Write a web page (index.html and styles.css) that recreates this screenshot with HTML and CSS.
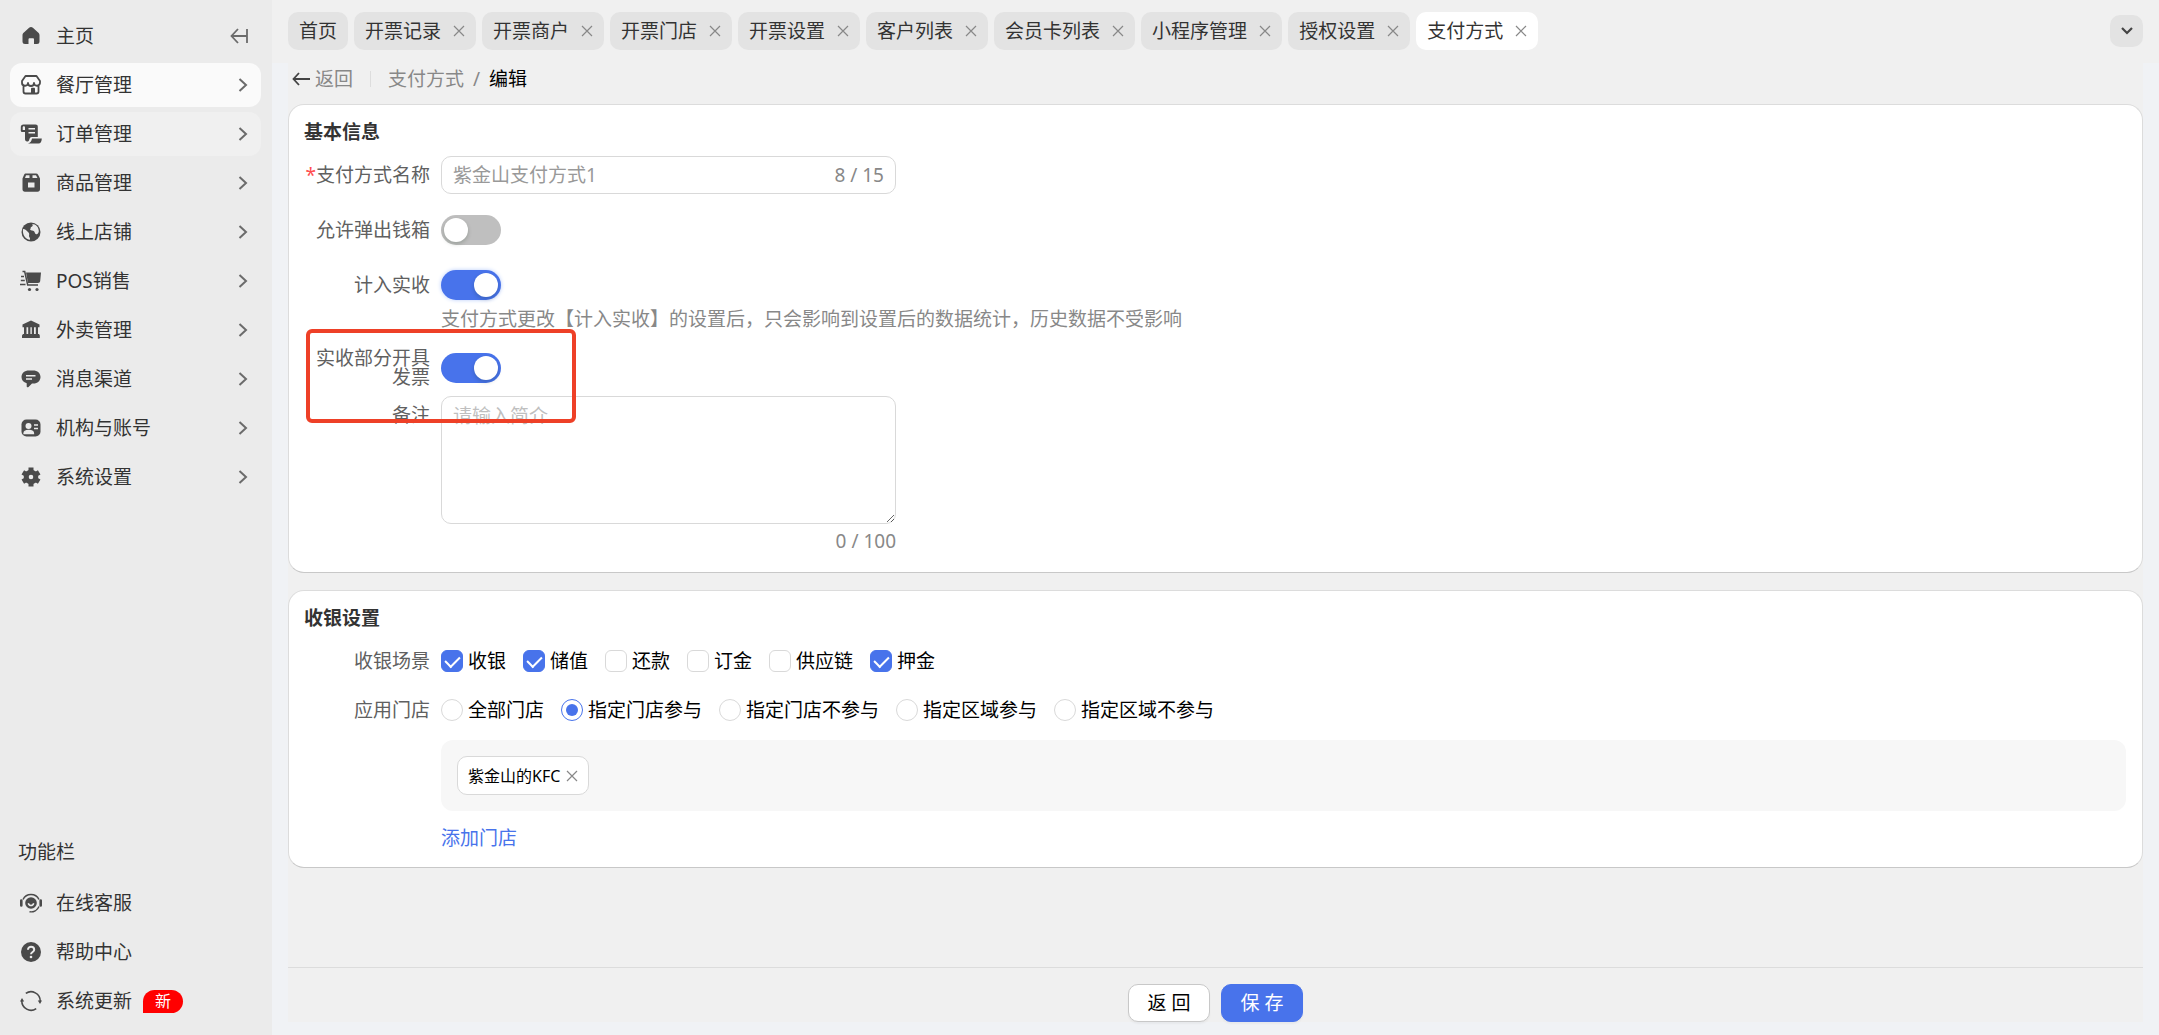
FILE: index.html
```html
<!DOCTYPE html>
<html lang="zh-CN">
<head>
    <meta charset="UTF-8">
    <meta name="viewport" content="width=device-width, initial-scale=1.0">
    <title>支付方式 - 编辑</title>
    <link rel="stylesheet" href="styles.css">
</head>
<body>

    <!-- Shared icons -->
    <svg class="sprite" aria-hidden="true">
        <symbol id="chevron" viewBox="0 0 10 16"><path d="M1.5 2l6.5 6-6.5 6" fill="none" stroke="currentColor" stroke-width="2"/></symbol>
        <symbol id="close" viewBox="0 0 12 12"><path d="M1 1l10 10M11 1L1 11" fill="none" stroke="currentColor" stroke-width="1.2"/></symbol>
    </svg>

    <!-- Sidebar -->
    <aside class="sidebar">
        <nav class="menu">
            <div class="menu-item">
                <a class="menu-link" href="#">
                    <svg class="menu-icon" viewBox="0 0 22 22"><path fill="currentColor" d="M11 2c.7 0 1.3.3 1.9.8l5.2 4.6c.9.8 1.4 1.6 1.4 2.800v6.300c0 1.700-1 2.500-2.500 2.500h-3v-4.500c0-.8-.4-1.200-1.200-1.200H9.700c-.8 0-1.200.4-1.200 1.200V19H5c-1.500 0-2.500-.8-2.500-2.500v-6.300c0-1.200.5-2 1.400-2.800l5.200-4.600C9.700 2.300 10.300 2 11 2z"/></svg>
                    主页
                </a>
                <button class="collapse" type="button" aria-label="收起菜单">
                    <svg width="18" height="16" viewBox="0 0 18 16"><path d="M8 1L1.500 8 8 15M2 8h15M17 1v14" fill="none" stroke="currentColor" stroke-width="1.800"/></svg>
                </button>
            </div>
            <a class="menu-item active" href="#">
                <svg class="menu-icon" viewBox="0 0 22 22"><path d="M5.500 2h11l3.500 5v1.500a3 3 0 0 1-6 .5 3 3 0 0 1-6 0 3 3 0 0 1-6-.5V7zM3.500 11v6.500c0 1.300.7 2 2 2h11c1.300 0 2-.7 2-2V11" fill="none" stroke="currentColor" stroke-width="1.800" stroke-linejoin="round"/><path d="M11 19.500V15c0-.8.400-1.200 1.200-1.200h1.600c.8 0 1.200.4 1.200 1.200v4.500z" fill="currentColor"/></svg>
                餐厅管理
                <svg class="arrow"><use href="#chevron"/></svg>
            </a>
            <a class="menu-item hover" href="#">
                <svg class="menu-icon" viewBox="0 0 22 22"><path fill="currentColor" fill-rule="evenodd" d="M3.500 1.500h12c1.500 0 2.300.9 2.300 2.300V14H12c-2 0-2.500 1.500-2.800 3-.3 1-1.200 1.500-2 1.500-1.500 0-2.200-1-2.200-2.500V9H2.200C1.300 9 .8 8.400.8 7.500V4.200c0-1.700 1-2.700 2.700-2.700zm-.8 5.500h2.300V4.500c0-1.600-2.300-1.600-2.300 0zM8.500 5v1.500H15V5zm0 4v1.500H15V9zM12 15.500h9.800c-.1 3-1.200 5-3.400 5H8c2.500-.5 3.500-2.500 4-5z"/></svg>
                订单管理
                <svg class="arrow"><use href="#chevron"/></svg>
            </a>
            <a class="menu-item" href="#">
                <svg class="menu-icon" viewBox="0 0 22 22"><path fill="currentColor" fill-rule="evenodd" d="M6 1.500h10c1 0 1.700.4 2.100 1.200L20 6.500v10.800c0 1.500-.9 2.400-2.400 2.400H4.900c-1.500 0-2.400-.9-2.400-2.400V6.500l1.600-3.800C4.400 1.900 5.100 1.500 6 1.500zM6 3.200L5 6h4.500V3.200zm6.500 0V6h5l-1.500-2.800zM8 10.500v5h6.500v-5z"/></svg>
                商品管理
                <svg class="arrow"><use href="#chevron"/></svg>
            </a>
            <a class="menu-item" href="#">
                <svg class="menu-icon" viewBox="0 0 22 22"><circle cx="11" cy="11" r="9.500" fill="currentColor"/><path fill="#ebebeb" d="M3 8c2.500.2 3.500 1.500 5 3 1.700 1.300 1.200 2.500 1 3.700-.2 1.300 1.500 2.200 1 4.100C5.500 18.500 2.300 14 3 8zM12 3c1.500 1 .5 2.500-.8 3-1 .5-.2 1.800-1.200 2.500 1 1.500 3 .8 4 1.800 1 1 .7 2.700 2.200 3 1.300.3 2-1 2.600-2.800C19 6.500 16 3 12 3z"/></svg>
                线上店铺
                <svg class="arrow"><use href="#chevron"/></svg>
            </a>
            <a class="menu-item" href="#">
                <svg class="menu-icon" viewBox="0 0 22 22"><path fill="currentColor" d="M6 2.500h15l-.8 8.500c-.1 1.300-.9 2-2.200 2H8z"/><path d="M2.500 1.500h2.200l3 13.500H18M1 6.500h3M.8 10.500h4M0 14.500h5.500" fill="none" stroke="currentColor" stroke-width="1.500"/><circle cx="9.500" cy="19.500" r="1.600" fill="currentColor"/><circle cx="17" cy="19.500" r="1.600" fill="currentColor"/></svg>
                POS销售
                <svg class="arrow"><use href="#chevron"/></svg>
            </a>
            <a class="menu-item" href="#">
                <svg class="menu-icon" viewBox="0 0 22 22"><path fill="currentColor" d="M11 1.500l8.500 4v2.800h-17V5.500zM4 8h2.500v7H4zM8.200 8h2.200v7H8.200zM11.800 8H14v7h-2.200zM15.800 8h2.200v7h-2.200zM3 15h16l.8 1.500V19H2v-2.500z"/></svg>
                外卖管理
                <svg class="arrow"><use href="#chevron"/></svg>
            </a>
            <a class="menu-item" href="#">
                <svg class="menu-icon" viewBox="0 0 22 22"><path fill="currentColor" d="M9 2.500h4c4.500 0 7.500 2.700 7.500 6.500s-3 6.500-7 6.500h-1.500L8.500 19c-.8.700-1.800.3-1.800-.8v-3C3.500 14.500 1.500 12 1.500 9c0-3.800 3-6.500 7.500-6.500z"/><path d="M6 7.800h9.500M6 11h6" stroke="#ebebeb" stroke-width="1.500"/></svg>
                消息渠道
                <svg class="arrow"><use href="#chevron"/></svg>
            </a>
            <a class="menu-item" href="#">
                <svg class="menu-icon" viewBox="0 0 22 22"><rect x="1.500" y="2.500" width="19" height="17" rx="5" fill="currentColor"/><circle cx="8.500" cy="9" r="3" fill="#ebebeb"/><path d="M4 16.500c0-4 9.500-4 9.500 0zM14 8h4M14 11.500h4" fill="#ebebeb" stroke="#ebebeb" stroke-width="1.300"/></svg>
                机构与账号
                <svg class="arrow"><use href="#chevron"/></svg>
            </a>
            <a class="menu-item" href="#">
                <svg class="menu-icon" viewBox="0 0 22 22"><circle cx="11" cy="11" r="4.800" fill="none" stroke="currentColor" stroke-width="5"/><path d="M11 1.500v4M11 16.500v4M2.800 6.300l3.400 2M15.800 13.700l3.400 2M2.800 15.700l3.400-2M15.800 8.300l3.400-2" stroke="currentColor" stroke-width="5"/></svg>
                系统设置
                <svg class="arrow"><use href="#chevron"/></svg>
            </a>
        </nav>

        <!-- Tools at the bottom -->
        <nav class="menu tools">
            <h2 class="tools-title">功能栏</h2>
            <a class="menu-item" href="#">
                <svg class="menu-icon" viewBox="0 0 22 22"><circle cx="11" cy="11" r="5.800" fill="currentColor"/><path d="M8.300 11.200c.8 3 4.600 3 5.400 0" fill="none" stroke="#ebebeb" stroke-width="1.500"/><path d="M3 7.500a8.900 8.900 0 0 1 16 0M19 14.500a8.700 8.700 0 0 1-9.500 5.200" fill="none" stroke="currentColor" stroke-width="1.500"/><path d="M1.300 8.500v5M20.700 8.500v5" stroke="currentColor" stroke-width="2.600" stroke-linecap="round"/></svg>
                在线客服
            </a>
            <a class="menu-item" href="#">
                <svg class="menu-icon" viewBox="0 0 22 22"><circle cx="11" cy="11" r="10" fill="currentColor"/><path d="M8 8.700c0-4 6.200-3.800 6.200 0 0 2.300-3.200 2.200-3.200 4.600" fill="none" stroke="#ebebeb" stroke-width="2"/><circle cx="11" cy="16" r="1.300" fill="#ebebeb"/></svg>
                帮助中心
            </a>
            <a class="menu-item" href="#">
                <svg class="menu-icon" viewBox="0 0 22 22"><path d="M5.800 3.400A9.200 9.200 0 0 1 20.200 11M16.200 18.600A9.200 9.200 0 0 1 1.800 11" fill="none" stroke="currentColor" stroke-width="1.600"/><path fill="currentColor" d="M17.800 10.500h4.200L20 14zM0 11.500h4.200L2 8z"/></svg>
                系统更新
                <span class="badge">新</span>
            </a>
        </nav>
    </aside>

    <div class="main">
        <!-- Open tabs -->
        <header class="tab-bar">
            <div class="tabs">
                <div class="tab"><a href="#">首页</a></div>
                <div class="tab"><a href="#">开票记录</a><button type="button" aria-label="关闭"><svg><use href="#close"/></svg></button></div>
                <div class="tab"><a href="#">开票商户</a><button type="button" aria-label="关闭"><svg><use href="#close"/></svg></button></div>
                <div class="tab"><a href="#">开票门店</a><button type="button" aria-label="关闭"><svg><use href="#close"/></svg></button></div>
                <div class="tab"><a href="#">开票设置</a><button type="button" aria-label="关闭"><svg><use href="#close"/></svg></button></div>
                <div class="tab"><a href="#">客户列表</a><button type="button" aria-label="关闭"><svg><use href="#close"/></svg></button></div>
                <div class="tab"><a href="#">会员卡列表</a><button type="button" aria-label="关闭"><svg><use href="#close"/></svg></button></div>
                <div class="tab"><a href="#">小程序管理</a><button type="button" aria-label="关闭"><svg><use href="#close"/></svg></button></div>
                <div class="tab"><a href="#">授权设置</a><button type="button" aria-label="关闭"><svg><use href="#close"/></svg></button></div>
                <div class="tab current"><a href="#">支付方式</a><button type="button" aria-label="关闭"><svg><use href="#close"/></svg></button></div>
            </div>
            <button class="tab-more" type="button" aria-label="更多标签">
                <svg width="12" height="8" viewBox="0 0 12 8"><path d="M1 1l5 5 5-5" fill="none" stroke="currentColor" stroke-width="2.200"/></svg>
            </button>
        </header>

        <div class="content">
            <div class="breadcrumb">
                <a class="back" href="#">
                    <svg width="18" height="14" viewBox="0 0 18 14"><path d="M7 1L1.500 7 7 13M2 7h16" fill="none" stroke="currentColor" stroke-width="1.800"/></svg>
                    返回
                </a>
                <span class="divider"></span>
                <a href="#">支付方式</a>
                <span class="slash">/</span>
                <span class="here">编辑</span>
            </div>

            <!-- Basic info -->
            <section class="card">
                <h3>基本信息</h3>
                <div class="row">
                    <label class="label" for="name"><span class="required">*</span>支付方式名称</label>
                    <div class="text-box">
                        <input id="name" type="text" value="紫金山支付方式1" maxlength="15">
                        <span class="count">8 / 15</span>
                    </div>
                </div>
                <div class="row">
                    <label class="label" for="cashbox">允许弹出钱箱</label>
                    <input class="switch" id="cashbox" type="checkbox" role="switch">
                </div>
                <div class="row with-hint">
                    <label class="label" for="income">计入实收</label>
                    <input class="switch" id="income" type="checkbox" role="switch" checked>
                </div>
                <p class="hint">支付方式更改【计入实收】的设置后，只会影响到设置后的数据统计，历史数据不受影响</p>
                <div class="row compact">
                    <label class="label" for="invoice">实收部分开具发票</label>
                    <input class="switch" id="invoice" type="checkbox" role="switch" checked>
                </div>
                <div class="row remark">
                    <label class="label" for="remark">备注</label>
                    <div class="remark-box">
                        <textarea id="remark" placeholder="请输入简介" maxlength="100"></textarea>
                        <span class="count">0 / 100</span>
                    </div>
                </div>
                <div class="highlight"></div>
            </section>

            <!-- Cashier settings -->
            <section class="card">
                <h3>收银设置</h3>
                <div class="row" role="group" aria-labelledby="scene">
                    <span class="label" id="scene">收银场景</span>
                    <div class="choices">
                        <label><input type="checkbox" checked>收银</label>
                        <label><input type="checkbox" checked>储值</label>
                        <label><input type="checkbox">还款</label>
                        <label><input type="checkbox">订金</label>
                        <label><input type="checkbox">供应链</label>
                        <label><input type="checkbox" checked>押金</label>
                    </div>
                </div>
                <div class="row" role="radiogroup" aria-labelledby="stores">
                    <span class="label" id="stores">应用门店</span>
                    <div class="choices">
                        <label><input type="radio" name="store">全部门店</label>
                        <label><input type="radio" name="store" checked>指定门店参与</label>
                        <label><input type="radio" name="store">指定门店不参与</label>
                        <label><input type="radio" name="store">指定区域参与</label>
                        <label><input type="radio" name="store">指定区域不参与</label>
                    </div>
                </div>
                <div class="store-list">
                    <span class="store">紫金山的KFC<button type="button" aria-label="移除"><svg><use href="#close"/></svg></button></span>
                </div>
                <a class="add-store" href="#">添加门店</a>
            </section>

            <footer class="actions">
                <button class="btn" type="button">返 回</button>
                <button class="btn primary" type="button">保 存</button>
            </footer>
        </div>
    </div>

</body>
</html>
```

FILE: styles.css
```css
* {
    box-sizing: border-box;
}
body {
    margin: 0;
    display: flex;
    min-height: 100vh;
    background-color: #f0f2f5;
    color: #333333;
    font-family: "Noto Sans", "Noto Sans CJK SC", sans-serif;
    font-size: 19px;
    font-weight: 400;
    line-height: 24px;
}
a {
    color: inherit;
    text-decoration: none;
}
button, input, textarea {
    font: inherit;
    color: inherit;
}
button {
    padding: 0;
    border: none;
    background: none;
    cursor: pointer;
}
svg {
    display: block;
}
.sprite {
    display: none;
}

/* Sidebar */
.sidebar {
    flex: 0 0 272px;
    display: flex;
    flex-direction: column;
    justify-content: space-between;
    padding: 14px 11px 12px 10px;
    background-color: #ebebeb;
}
.menu {
    display: flex;
    flex-direction: column;
    gap: 5px;
}
.menu-item {
    display: flex;
    align-items: center;
    gap: 14px;
    height: 44px;
    padding: 0 13px 0 10px;
    border-radius: 12px;
}
.menu-link {
    display: flex;
    align-items: center;
    gap: 14px;
    flex: 1;
}
.menu-item.active {
    background-color: #fafafa;
}
.menu-item.hover {
    background-color: #f0f0f0;
}
.menu-icon {
    width: 22px;
    height: 22px;
    color: #4a4a4a;
}
.arrow {
    width: 10px;
    height: 16px;
    margin-left: auto;
    color: #6b6b6b;
}
.collapse {
    color: #6b6b6b;
}
.tools-title {
    margin: 0 8px 12px;
    font-size: 19px;
    font-weight: 400;
}
.badge {
    padding: 0 12px;
    margin-left: -3px;
    border-radius: 12px 12px 12px 0;
    background-color: #ff0000;
    color: #ffffff;
    font-size: 16px;
    line-height: 23px;
}

/* Tabs */
.main {
    flex: 1;
    min-width: 0;
    display: flex;
    flex-direction: column;
}
.tab-bar {
    display: flex;
    align-items: center;
    justify-content: space-between;
    height: 63px;
    padding: 0 16px 2px;
    background-color: #f0f0f0;
}
.tabs {
    display: flex;
    gap: 6px;
}
.tab {
    display: flex;
    align-items: center;
    gap: 12px;
    height: 38px;
    padding: 0 11px;
    border-radius: 10px;
    background-color: #e3e3e3;
    white-space: nowrap;
}
.tab.current {
    background-color: #ffffff;
}
.tab svg, .store svg {
    width: 12px;
    height: 12px;
    color: #888888;
}
.tab-more {
    display: flex;
    align-items: center;
    justify-content: center;
    width: 33px;
    height: 32px;
    border-radius: 10px;
    background-color: #e3e3e3;
    color: #444444;
}

/* Page content */
.content {
    flex: 1;
    display: flex;
    flex-direction: column;
    margin: 0 16px 13px;
    background-color: #f0f0f0;
}
.breadcrumb {
    display: flex;
    align-items: center;
    height: 32px;
    margin-bottom: 9px;
    padding-left: 4px;
    color: #888888;
}
.back {
    display: flex;
    align-items: center;
    gap: 5px;
}
.back svg {
    color: #444444;
}
.divider {
    width: 1px;
    height: 16px;
    margin: 0 17px;
    background-color: #dddddd;
}
.slash {
    margin: 0 9px;
}
.here {
    color: #000000;
}
.card {
    position: relative;
    margin-bottom: 17px;
    padding: 15px 16px 17px 15px;
    border: 1px solid #dcdcdc;
    border-bottom-color: #c8c8c8;
    border-radius: 16px;
    background-color: #ffffff;
}
.card h3 {
    margin: 0 0 12px;
    font-size: 19px;
    font-weight: 700;
}

/* Form rows */
.row {
    display: flex;
    align-items: center;
    gap: 11px;
    min-height: 38px;
    margin-bottom: 17px;
}
.row.with-hint {
    margin-bottom: 3px;
}
.row.compact {
    margin-bottom: 9px;
}
.row.remark {
    align-items: flex-start;
    margin-bottom: 2px;
}
.label {
    flex: 0 0 126px;
    color: #606060;
    line-height: 19px;
    text-align: right;
}
.remark .label {
    padding-top: 10px;
}
.required {
    color: #ff4d4f;
}
.text-box {
    display: flex;
    align-items: center;
    width: 455px;
    height: 38px;
    padding: 0 11px;
    border: 1px solid #d9d9d9;
    border-radius: 10px;
}
.text-box input {
    flex: 1;
    min-width: 0;
    padding: 0;
    border: none;
    outline: none;
    background: none;
    color: #999999;
}
.count {
    color: #888888;
}
.switch {
    appearance: none;
    width: 60px;
    height: 30px;
    margin: 0;
    padding: 3px;
    border-radius: 15px;
    background-color: #bfbfbf;
    cursor: pointer;
}
.switch::before {
    content: "";
    display: block;
    width: 24px;
    height: 24px;
    border-radius: 50%;
    background-color: #ffffff;
    box-shadow: 0 2px 4px rgba(0, 35, 11, 0.2);
}
.switch:checked {
    background-color: #4873eb;
}
.switch:checked::before {
    margin-left: auto;
}
#income {
    box-shadow: 0 0 4px #b9cdfb;
}
.hint {
    margin: 0 0 18px 137px;
    color: #888888;
}
.remark-box {
    display: flex;
    flex-direction: column;
    align-items: flex-end;
    gap: 5px;
    width: 455px;
}
.remark-box textarea {
    width: 100%;
    height: 128px;
    padding: 7px 11px;
    border: 1px solid #d9d9d9;
    border-radius: 10px;
    outline: none;
    resize: vertical;
}
.remark-box textarea::placeholder {
    color: #bfbfbf;
}
/* Red frame round the invoice switch */
.highlight {
    position: absolute;
    top: 224px;
    left: 17px;
    width: 270px;
    height: 94px;
    border: 4px solid #ee4027;
    border-radius: 6px;
    pointer-events: none;
}

/* Checkboxes and radios */
.choices {
    display: flex;
    flex-wrap: wrap;
    gap: 17px;
    color: #000000;
}
.choices label {
    display: flex;
    align-items: center;
    gap: 5px;
}
.choices input {
    appearance: none;
    display: flex;
    align-items: center;
    justify-content: center;
    width: 22px;
    height: 22px;
    margin: 0;
    border: 1px solid #d9d9d9;
    border-radius: 6px;
    background-color: #ffffff;
}
.choices input[type="radio"] {
    border-radius: 50%;
}
.choices input[type="checkbox"]:checked {
    border-color: #4873eb;
    background-color: #4873eb;
}
.choices input[type="checkbox"]:checked::before {
    content: "";
    width: 7px;
    height: 12px;
    margin-bottom: 3px;
    border: solid #ffffff;
    border-width: 0 2px 2px 0;
    transform: rotate(45deg);
}
.choices input[type="radio"]:checked {
    border-color: #4873eb;
}
.choices input[type="radio"]:checked::before {
    content: "";
    width: 12px;
    height: 12px;
    border-radius: 50%;
    background-color: #4873eb;
}
.card .row[role] {
    margin-bottom: 11px;
}

/* Chosen stores */
.store-list {
    margin: 0 0 15px 137px;
    padding: 16px;
    display: flex;
    border-radius: 12px;
    background-color: #f7f7f7;
}
.store {
    display: flex;
    align-items: center;
    gap: 6px;
    height: 39px;
    padding: 0 10px;
    border: 1px solid #d9d9d9;
    border-radius: 10px;
    background-color: #ffffff;
    color: #000000;
    font-size: 16px;
}
.add-store {
    margin-left: 137px;
    color: #4873eb;
}

/* Footer buttons */
.actions {
    display: flex;
    justify-content: center;
    gap: 11px;
    margin-top: auto;
    padding-top: 16px;
    border-top: 1px solid #dcdcdc;
}
.btn {
    width: 82px;
    height: 38px;
    border: 1px solid #c8c8c8;
    border-radius: 10px;
    background-color: #ffffff;
    color: #000000;
    box-shadow: 0 2px 2px rgba(0, 0, 0, 0.04);
}
.btn.primary {
    border-color: #4873eb;
    background-color: #4873eb;
    color: #ffffff;
}
```
